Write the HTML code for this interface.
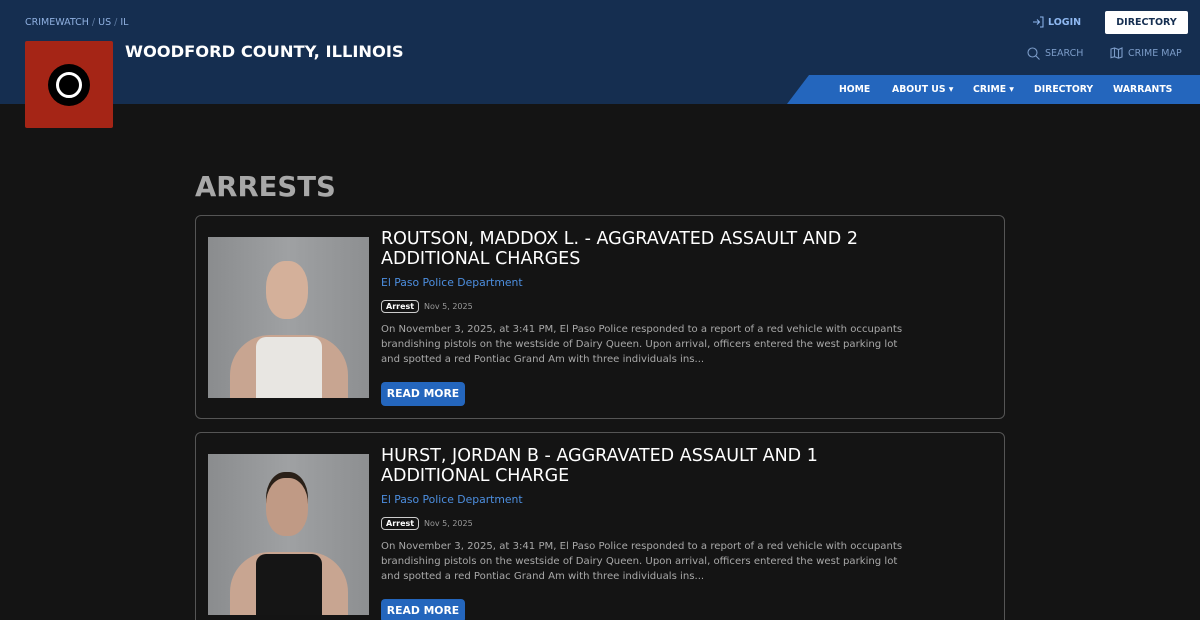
<!DOCTYPE html>
<html><head><meta charset="utf-8"><style>
*{margin:0;padding:0;box-sizing:border-box}
html,body{width:1200px;height:620px;overflow:hidden}
body{background:#141414;font-family:"DejaVu Sans","Liberation Sans",sans-serif;position:relative}
.hdr{position:absolute;left:0;top:0;width:1200px;height:104px;background:#152e50}
.crumb{position:absolute;left:25px;top:17px;font-size:9.5px;color:#8fb0e0}
.crumb span{color:#5b78a0}
.logo{position:absolute;left:25px;top:41px;width:88px;height:87px;background:#a52516;border-radius:2px}
.logo .o{position:absolute;left:23px;top:23px;width:42px;height:42px;border-radius:50%;background:#000}
.logo .i{position:absolute;left:8px;top:8px;width:26px;height:26px;border-radius:50%;border:3px solid #fff}
.title{position:absolute;left:125px;top:42px;font-size:16.3px;font-weight:bold;color:#fff}
.login{position:absolute;left:1032px;top:16px;font-size:9.5px;font-weight:bold;color:#8fb8f0;display:flex;align-items:center;gap:4px}
.dirbtn{position:absolute;left:1105px;top:11px;width:83px;height:23px;background:#fff;border-radius:2px;font-size:9.5px;font-weight:bold;color:#152e50;text-align:center;line-height:23px}
.search{position:absolute;left:1027px;top:47px;font-size:9.5px;color:#7c9cc8;display:flex;align-items:center;gap:5px}
.map{position:absolute;left:1110px;top:47px;font-size:9.5px;color:#7c9cc8;display:flex;align-items:center;gap:5px}
.nav{position:absolute;left:787px;top:75px;width:413px;height:29px;background:#2466bd;clip-path:polygon(22px 0,100% 0,100% 100%,0 100%)}
.nav span{position:absolute;top:9px;font-size:9.3px;font-weight:bold;color:#fff}
h1{position:absolute;left:195px;top:171px;font-size:27.5px;font-weight:bold;color:#a8a8a8}
.card{position:absolute;left:195px;width:810px;height:204px;border:1px solid #555;border-radius:6px;background:#141414}
.photo{position:absolute;left:12px;top:21px;width:161px;height:161px;background:linear-gradient(90deg,#8a8c8e,#9fa1a3 50%,#8d8f91);overflow:hidden}
.head{position:absolute;left:58px;top:24px;width:42px;height:58px;border-radius:45%;background:#c9a48c}
.body{position:absolute;left:22px;top:98px;width:118px;height:80px;border-radius:40px 40px 0 0;background:#c8a591}
.shirt{position:absolute;left:48px;top:100px;width:66px;height:70px;border-radius:10px 10px 0 0}
.ct{position:absolute;left:185px;top:13px;width:520px;font-size:17.5px;color:#fff;line-height:20px}
.dept{position:absolute;left:185px;top:60px;font-size:10.8px;color:#4d8fe0}
.tag{position:absolute;left:185px;top:84px;border:1px solid #ccc;border-radius:4px;padding:1px 4px;font-size:8px;font-weight:bold;color:#fff}
.date{position:absolute;left:228px;top:86px;font-size:8px;color:#999}
.txt{position:absolute;left:185px;top:106px;width:522px;font-size:10.1px;color:#a8a8a8;line-height:15px}
.rm{position:absolute;left:185px;top:166px;width:84px;height:24px;background:#2466bd;border-radius:4px;color:#fff;font-size:10.8px;font-weight:bold;text-align:center;line-height:24px}
</style></head><body>
<div class="hdr">
<div class="crumb">CRIMEWATCH <span>/</span> US <span>/</span> IL</div>
<div class="title">WOODFORD COUNTY, ILLINOIS</div>
<div class="login"><svg width="12" height="12" viewBox="0 0 12 12" fill="none" stroke="#8fb8f0" stroke-width="1"><path d="M1 6h6M5 3.5L7.5 6 5 8.5M8 1h3v10H8"/></svg>LOGIN</div>
<div class="dirbtn">DIRECTORY</div>
<div class="search"><svg width="13" height="13" viewBox="0 0 13 13" fill="none" stroke="#7c9cc8" stroke-width="1.1"><circle cx="5.5" cy="5.5" r="4.5"/><path d="M9 9l3.5 3.5"/></svg>SEARCH</div>
<div class="map"><svg width="13" height="12" viewBox="0 0 13 12" fill="none" stroke="#7c9cc8" stroke-width="1.1"><path d="M1 2l3.5-1 4 1.5L12 1v9l-3.5 1.2-4-1.5L1 10.7zM4.5 1v9.2M8.5 2.5v8.7"/></svg>CRIME MAP</div>
<div class="nav"><span style="left:52px">HOME</span><span style="left:105px">ABOUT US ▾</span><span style="left:186px">CRIME ▾</span><span style="left:247px">DIRECTORY</span><span style="left:326px">WARRANTS</span></div>
</div>
<div class="logo"><div class="o"><div class="i"></div></div></div>
<h1>ARRESTS</h1>
<div class="card" style="top:215px">
<div class="photo"><div class="body"></div><div class="shirt" style="background:#e8e6e2"></div><div class="head" style="background:#d4b09a"></div></div>
<div class="ct">ROUTSON, MADDOX L. - AGGRAVATED ASSAULT AND 2 ADDITIONAL CHARGES</div>
<div class="dept">El Paso Police Department</div>
<div class="tag">Arrest</div><div class="date">Nov 5, 2025</div>
<div class="txt">On November 3, 2025, at 3:41 PM, El Paso Police responded to a report of a red vehicle with occupants brandishing pistols on the westside of Dairy Queen. Upon arrival, officers entered the west parking lot and spotted a red Pontiac Grand Am with three individuals ins...</div>
<div class="rm">READ MORE</div>
</div>
<div class="card" style="top:432px">
<div class="photo"><div class="body"></div><div class="shirt" style="background:#151515"></div><div class="head" style="background:#c09a85;box-shadow:0 -6px 0 #2a2018"></div></div>
<div class="ct">HURST, JORDAN B - AGGRAVATED ASSAULT AND 1 ADDITIONAL CHARGE</div>
<div class="dept">El Paso Police Department</div>
<div class="tag">Arrest</div><div class="date">Nov 5, 2025</div>
<div class="txt">On November 3, 2025, at 3:41 PM, El Paso Police responded to a report of a red vehicle with occupants brandishing pistols on the westside of Dairy Queen. Upon arrival, officers entered the west parking lot and spotted a red Pontiac Grand Am with three individuals ins...</div>
<div class="rm">READ MORE</div>
</div>
</body></html>
